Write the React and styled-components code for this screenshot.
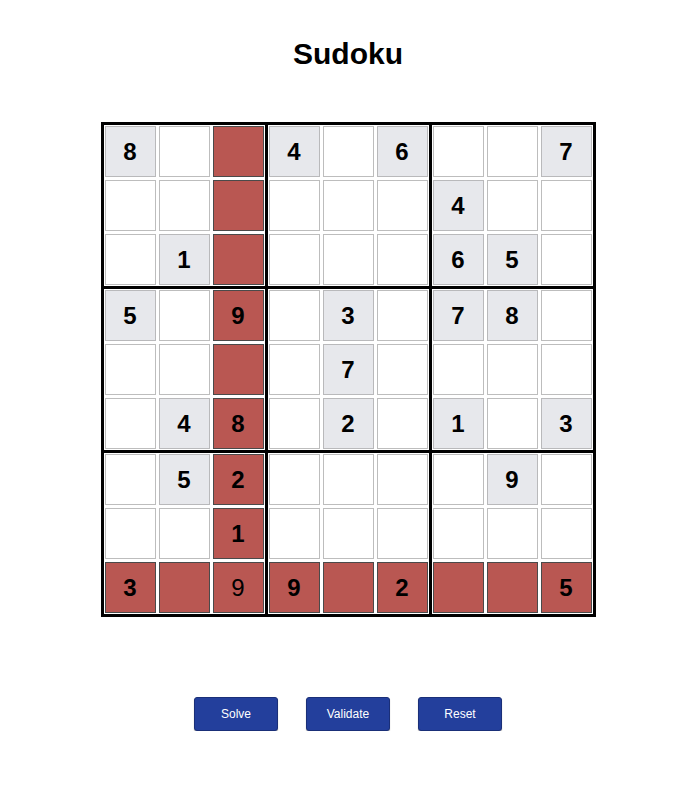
import React from 'react'
import styled, { createGlobalStyle } from 'styled-components'

const GlobalStyle = createGlobalStyle`
  body {
    margin: 0;
    background: #fff;
    font-family: "Liberation Sans", Arial, sans-serif;
  }
`

const Page = styled.main`
  display: flex;
  flex-direction: column;
  align-items: center;
  padding: 37px 4px 0 0;
`

const Title = styled.h1`
  margin: 0;
  font-size: 30px;
  line-height: 34px;
  font-weight: bold;
  color: #000;
`

const Board = styled.div`
  margin-top: 51px;
  display: grid;
  grid-template-columns: repeat(3, auto);
  gap: 3px;
  background: #000;
  border: 3px solid #000;
`

const Box = styled.div`
  display: grid;
  grid-template-columns: repeat(3, 51px);
  grid-auto-rows: 51px;
  gap: 3px;
  padding: 1px;
  background: #fff;
`

const Cell = styled.div`
  box-sizing: border-box;
  display: flex;
  align-items: center;
  justify-content: center;
  font-size: 24px;
  font-weight: ${p => (p.$entered ? 'normal' : 'bold')};
  color: #000;
  background: ${p =>
    p.$variant === 'red' ? '#b95752' : p.$variant === 'given' ? '#e7e8ec' : '#fff'};
  border: 1px solid
    ${p => (p.$variant === 'red' ? '#4a4a4a' : p.$variant === 'given' ? '#b9b9bb' : '#bdbdbd')};
`

const Actions = styled.div`
  display: flex;
  gap: 28px;
  margin-top: 80px;
`

const Button = styled.button`
  width: 84px;
  height: 34px;
  border: 1px solid #1a2f78;
  border-radius: 3px;
  background: #233f9c;
  color: #fff;
  font-family: "Liberation Sans", Arial, sans-serif;
  font-size: 12px;
  box-shadow: 0 1px 1px rgba(0, 0, 0, 0.35);
  cursor: pointer;
`

// grid: digit or '', given cells in gray, red cells marked
const rows = [
  '8 _ _ 4 _ 6 _ _ 7',
  '_ _ _ _ _ _ 4 _ _',
  '_ 1 _ _ _ _ 6 5 _',
  '5 _ 9 _ 3 _ 7 8 _',
  '_ _ _ _ 7 _ _ _ _',
  '_ 4 8 _ 2 _ 1 _ 3',
  '_ 5 2 _ _ _ _ 9 _',
  '_ _ 1 _ _ _ _ _ _',
  '3 _ 9 9 _ 2 _ _ 5',
].map(r => r.split(' ').map(v => (v === '_' ? '' : v)))

const isRed = (r, c) => c === 2 || r === 8
const isEntered = (r, c) => r === 8 && c === 2

const boxCells = b => {
  const br = Math.floor(b / 3) * 3
  const bc = (b % 3) * 3
  const out = []
  for (let r = br; r < br + 3; r++) {
    for (let c = bc; c < bc + 3; c++) out.push([r, c])
  }
  return out
}

const App = () => (
  <Page>
    <GlobalStyle />
    <Title>Sudoku</Title>
    <Board>
      {Array.from({ length: 9 }, (_, b) => (
        <Box key={b}>
          {boxCells(b).map(([r, c]) => {
            const value = rows[r][c]
            const variant = isRed(r, c) ? 'red' : value ? 'given' : 'plain'
            return (
              <Cell key={`${r}-${c}`} $variant={variant} $entered={isEntered(r, c)}>
                {value}
              </Cell>
            )
          })}
        </Box>
      ))}
    </Board>
    <Actions>
      <Button>Solve</Button>
      <Button>Validate</Button>
      <Button>Reset</Button>
    </Actions>
  </Page>
)

export default App
